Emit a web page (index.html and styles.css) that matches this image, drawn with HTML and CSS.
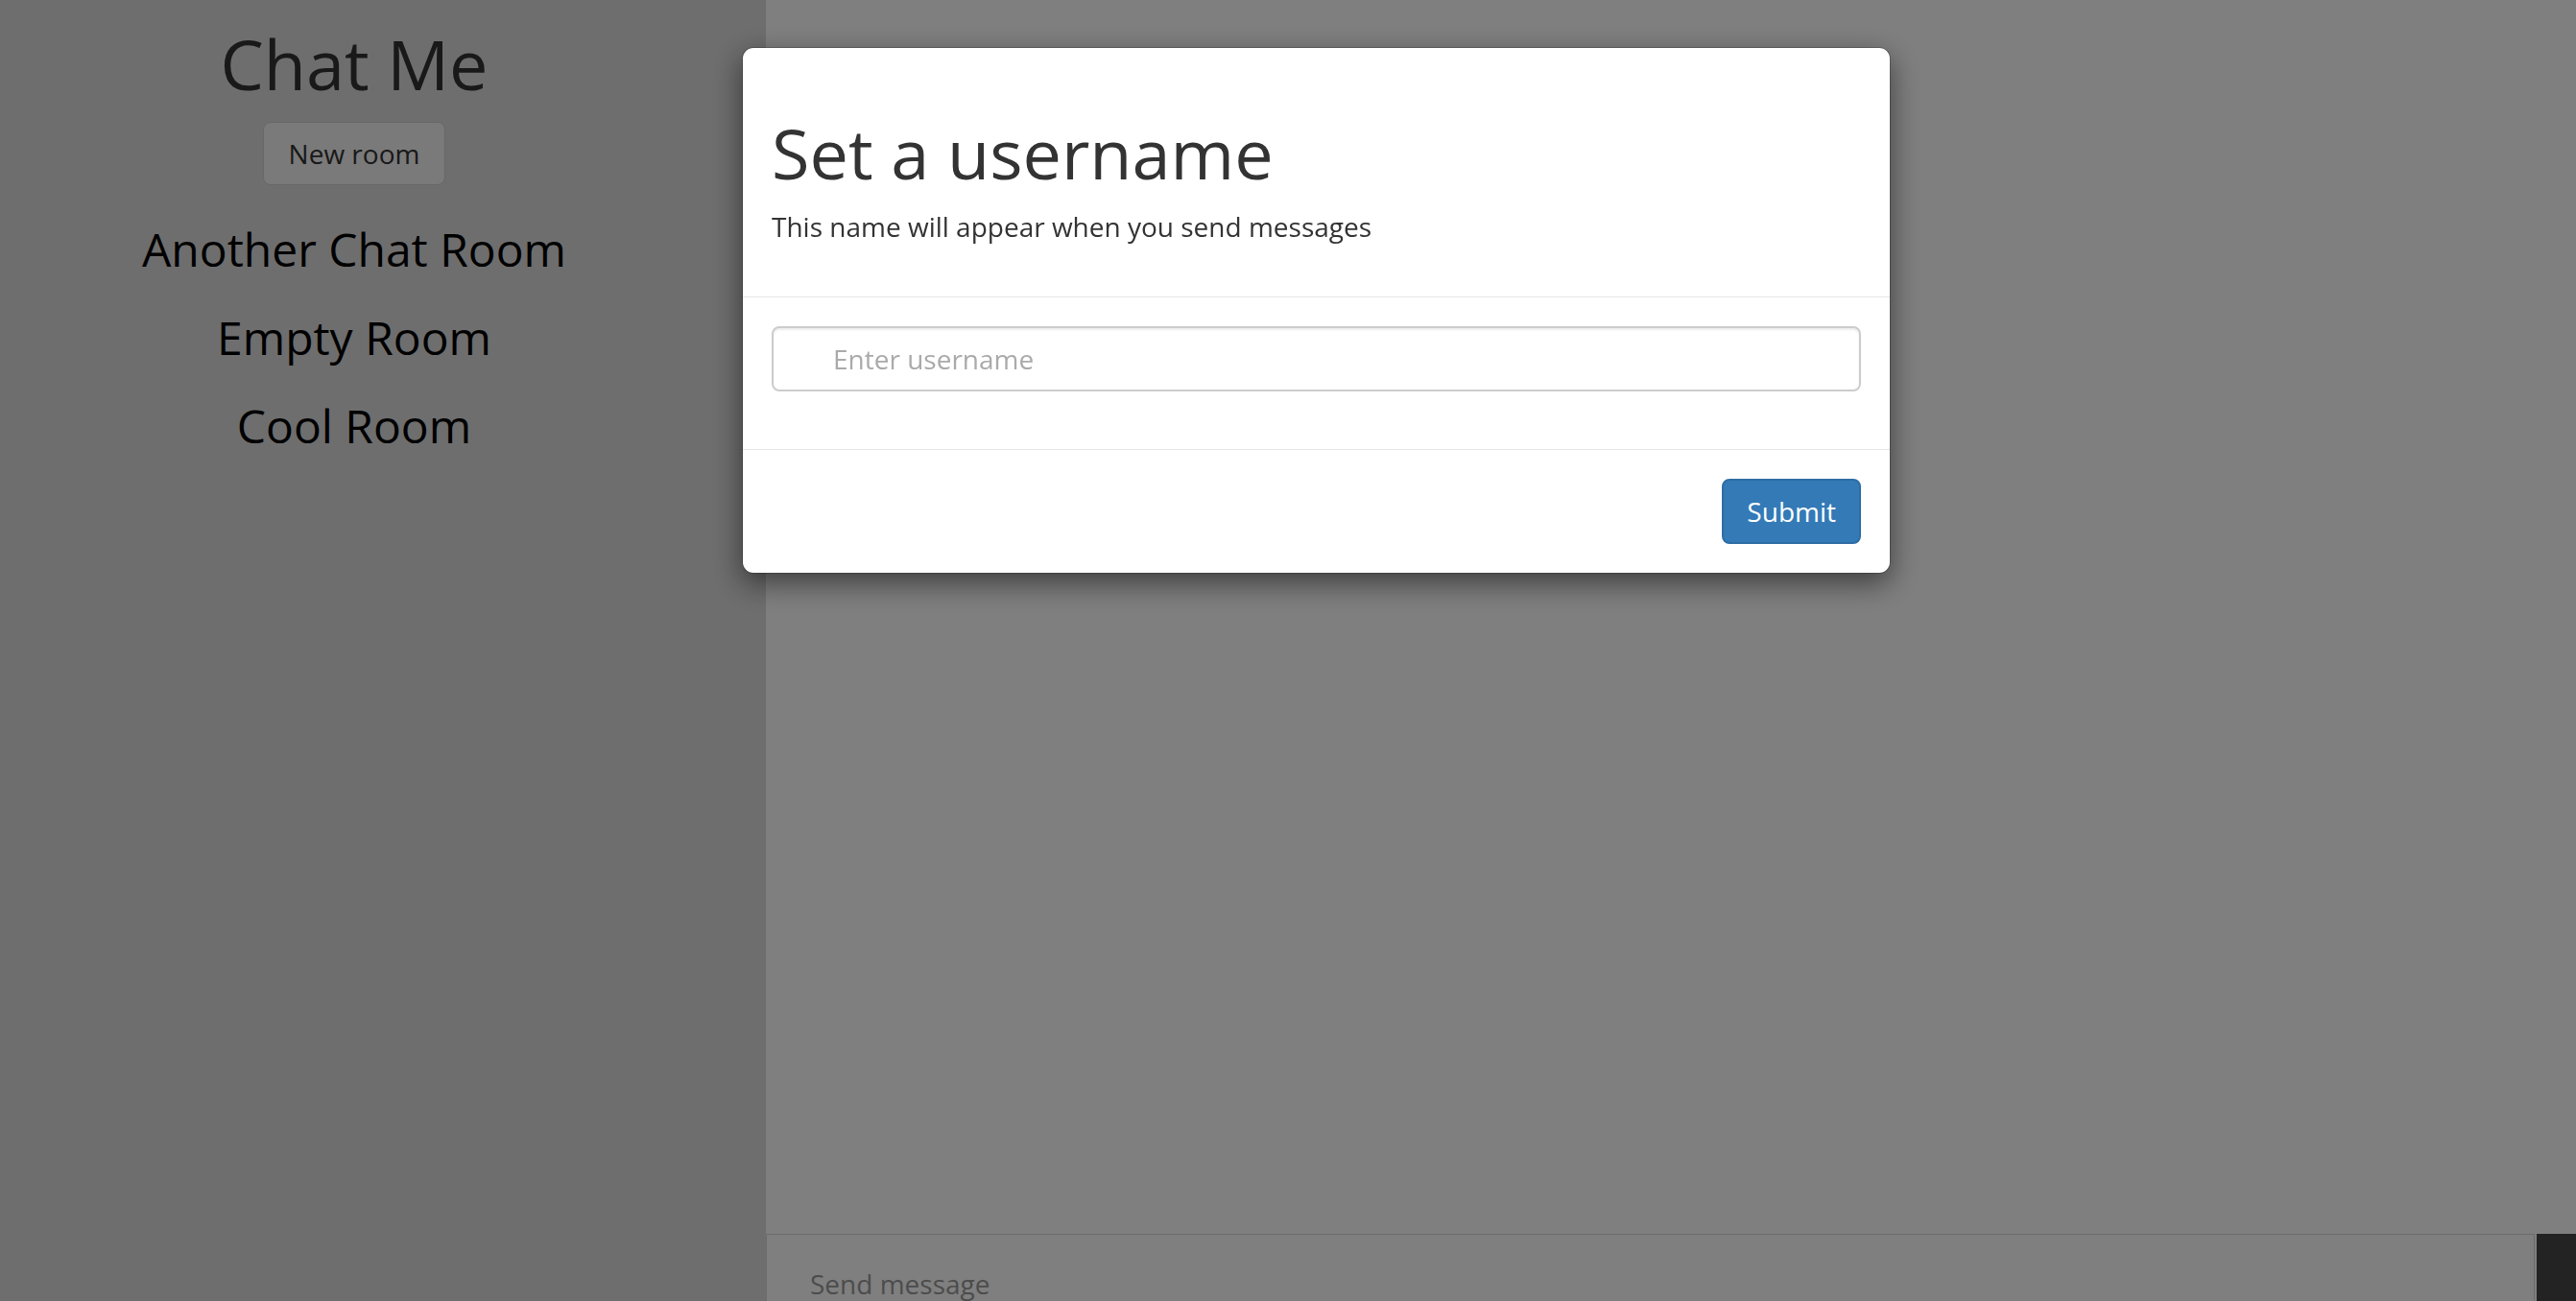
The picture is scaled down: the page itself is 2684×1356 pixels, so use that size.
FILE: index.html
```html
<!DOCTYPE html>
<html lang="en">
<head>
<meta charset="utf-8">
<title>Chat Me</title>
<link rel="stylesheet" href="styles.css">
</head>
<body>
<div class="app">
  <aside class="sidebar">
    <h1 class="brand">Chat Me</h1>
    <button class="btn btn-default" type="button">New room</button>
    <ul class="rooms">
      <li class="room">Another Chat Room</li>
      <li class="room">Empty Room</li>
      <li class="room">Cool Room</li>
    </ul>
  </aside>
  <main class="main">
    <div class="messages"></div>
    <form class="composer">
      <input class="composer-input" type="text" placeholder="Send message">
      <button class="composer-send" type="button"></button>
    </form>
  </main>
</div>

<div class="backdrop"></div>
<div class="modal">
  <div class="modal-dialog">
    <div class="modal-header">
      <h1 class="modal-title">Set a username</h1>
      <p class="modal-sub">This name will appear when you send messages</p>
    </div>
    <div class="modal-body">
      <div class="form-group">
        <input class="form-control" type="text" placeholder="Enter username">
      </div>
    </div>
    <div class="modal-footer">
      <button class="btn btn-primary" type="button">Submit</button>
    </div>
  </div>
</div>
</body>
</html>
```

FILE: styles.css
```css
* { box-sizing: border-box; }

html, body {
  margin: 0;
  padding: 0;
  height: 100%;
  overflow: hidden;
  background: #ffffff;
  font-family: "Open Sans", "Liberation Sans", sans-serif;
  color: #333333;
}

.app {
  display: flex;
  width: 2684px;
  height: 1356px;
}

/* ---------- sidebar ---------- */
.sidebar {
  flex: 0 0 798px;
  background: #dcdcdc;
  padding: 0 60px 0 0;
  display: flex;
  flex-direction: column;
  align-items: center;
}

.brand {
  margin: 26px 0 21px;
  font-size: 72px;
  line-height: 80px;
  font-weight: 400;
  color: #333333;
}

.btn {
  font-family: "Open Sans", "Liberation Sans", sans-serif;
  font-size: 28px;
  line-height: 40px;
  font-weight: 400;
  border-radius: 8px;
  cursor: pointer;
}

.btn-default {
  padding: 12px 26px;
  background: #f4f4f4;
  color: #333333;
  border: 1px solid #cfcfcf;
}

.rooms {
  list-style: none;
  margin: 40px 0 0;
  padding: 0;
  display: flex;
  flex-direction: column;
  align-items: center;
  gap: 39px;
}

.room {
  font-size: 48px;
  line-height: 53px;
  color: #000000;
}

/* ---------- main ---------- */
.main {
  flex: 1 1 auto;
  display: flex;
  flex-direction: column;
  overflow: hidden;
  background: #ffffff;
}

.messages {
  flex: 0 0 1286px;
}

.composer {
  display: flex;
  gap: 2px;
  margin: 0;
}

.composer-input {
  flex: 1 1 auto;
  height: 103px;
  padding: 0 45px;
  align-self: flex-start;
  border: 1px solid #d8d8d8;
  font-family: "Open Sans", "Liberation Sans", sans-serif;
  font-size: 28px;
  line-height: 40px;
  color: #333333;
  background: #ffffff;
  outline: none;
}

.composer-input::placeholder {
  color: #999999;
}

.composer-send {
  flex: 0 0 41px;
  height: 103px;
  border: 0;
  background: #474747;
}

/* ---------- modal ---------- */
.backdrop {
  position: fixed;
  inset: 0;
  background: rgba(0, 0, 0, 0.5);
}

.modal {
  position: fixed;
  inset: 0;
}

.modal-dialog {
  width: 1197px;
  margin: 49px 0 0 773px;
  background: #ffffff;
  border: 1px solid rgba(0, 0, 0, 0.2);
  border-radius: 12px;
  box-shadow: 0 10px 30px rgba(0, 0, 0, 0.5);
  background-clip: padding-box;
}

.modal-header {
  padding: 30px;
  border-bottom: 1px solid #e5e5e5;
}

.modal-title {
  margin: 39px 0 17px;
  font-size: 72px;
  line-height: 80px;
  font-weight: 400;
  color: #333333;
}

.modal-sub {
  margin: 0 0 23px;
  font-size: 28px;
  line-height: 40px;
  color: #333333;
}

.modal-body {
  padding: 30px;
}

.form-group {
  margin-bottom: 30px;
}

.form-control {
  display: block;
  width: 100%;
  height: 68px;
  padding: 12px 24px 12px 62px;
  font-family: "Open Sans", "Liberation Sans", sans-serif;
  font-size: 28px;
  line-height: 40px;
  color: #555555;
  background: #ffffff;
  border: 2px solid #cccccc;
  border-radius: 8px;
  box-shadow: inset 0 2px 2px rgba(0, 0, 0, 0.075);
  outline: none;
}

.form-control::placeholder {
  color: #aaaaaa;
}

.modal-footer {
  padding: 30px;
  border-top: 1px solid #e5e5e5;
  display: flex;
  justify-content: flex-end;
}

.btn-primary {
  padding: 12px 24px;
  background: #337ab7;
  color: #ffffff;
  border: 2px solid #2e6da4;
}
```
